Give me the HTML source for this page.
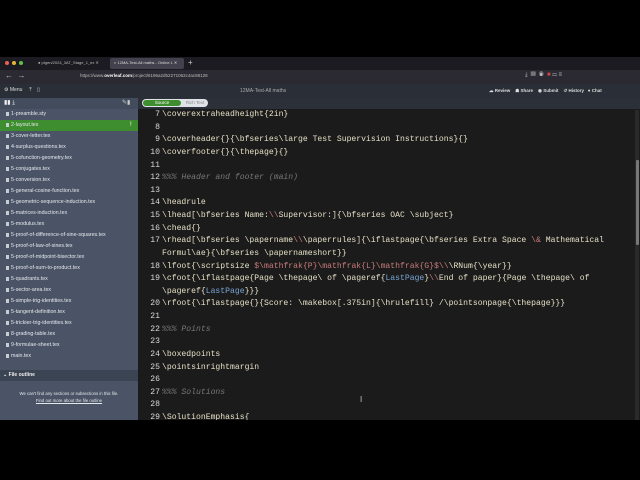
<!DOCTYPE html>
<html><head><meta charset="utf-8"><style>
*{margin:0;padding:0;box-sizing:border-box}
body{width:640px;height:480px;background:#000;overflow:hidden;font-family:"Liberation Sans",sans-serif;position:relative}
.abs{position:absolute}
#tabs{left:0;top:57px;width:640px;height:13px;background:#1c1b22}
#addr{left:0;top:70px;width:640px;height:14px;background:#2b2a33}
#tool{left:0;top:84px;width:640px;height:14px;background:#2a2f37;color:#ddd;font-size:5px}
#side{left:0;top:98px;width:138px;height:322px;background:#4a5466}
#sidehdr{left:0;top:98px;width:138px;height:11px;background:#434c5c}
#ed{left:138px;top:98px;width:502px;height:322px;background:#1b1b1b}
#edhdr{left:138px;top:98px;width:502px;height:11px;background:#2c3139}
.f{position:absolute;left:6px;font-size:5.3px;color:#e6e9ee;height:11px;line-height:11px;white-space:nowrap}
.f:before{content:"";display:inline-block;width:3px;height:4px;background:#c8cdd5;margin-right:2px;vertical-align:-0.5px}
#code{left:140px;top:109px;font-family:"Liberation Mono",monospace;font-size:8.1px;line-height:12.63px;color:#e5e0c6;white-space:pre}
.n{display:inline-block;width:20px;text-align:right;margin-right:2px;color:#d8d8d8}
.c{color:#777;font-style:italic}
.r{color:#c97b7b}
.b{color:#7aa6d6}
</style></head><body>
<div class="abs" id="tabs">
 <div class="abs" style="left:5px;top:4px;width:4px;height:4px;border-radius:50%;background:#ec5f57"></div>
 <div class="abs" style="left:12px;top:4px;width:4px;height:4px;border-radius:50%;background:#e2b43a"></div>
 <div class="abs" style="left:19px;top:4px;width:4px;height:4px;border-radius:50%;background:#5fc04b"></div>
 <div class="abs" style="left:38px;top:3px;font-size:4px;color:#bbb">● ptgen/2024_3AT_Stage_1_ex ✕</div>
 <div class="abs" style="left:110px;top:1px;width:74px;height:11px;background:#42414d;border-radius:2px"></div>
 <div class="abs" style="left:114px;top:3px;font-size:4px;color:#ddd">◐ 12MA-Test-All maths - Online L ✕</div>
 <div class="abs" style="left:188px;top:1px;font-size:8px;color:#ccc">+</div>
</div>
<div class="abs" id="addr">
 <div class="abs" style="left:5px;top:1px;font-size:8px;color:#bbb">←&nbsp; →</div>
 <div class="abs" style="left:80px;top:3px;font-size:4.5px;color:#bbb">https://www.<b style="color:#fff">overleaf.com</b>/project/6196a2d52271062c4ac88128</div>
 <div class="abs" style="left:525px;top:2px;font-size:6px;color:#bbb">⤓ &nbsp;▥ &nbsp;◉ &nbsp;<span style="color:#c44">■</span> ▭ ≡</div>
</div>
<div class="abs" id="tool">
 <div class="abs" style="left:4px;top:3px;font-size:5px">⚙ Menu &nbsp;&nbsp;&nbsp; ⤒ &nbsp;&nbsp; ▯</div>
 <div class="abs" style="left:240px;top:4px;font-size:5px;color:#aaa">12MA-Test-All maths</div>
 <div class="abs" style="left:489px;top:4px;font-size:4.5px;font-weight:bold">☁ Review &nbsp;&nbsp; ☗ Share &nbsp;&nbsp; ◉ Submit &nbsp;&nbsp; ↺ History &nbsp; ● Chat</div>
</div>
<div class="abs" id="side"></div>
<div class="abs" id="sidehdr"><div class="abs" style="left:4px;top:1px;font-size:6px;color:#eee">▮▮ ⤓</div><div class="abs" style="left:122px;top:1px;font-size:6px;color:#ccc">✎▮</div></div>
<div class="abs" style="left:0;top:120px;width:138px;height:11px;background:#3e8e2f"></div>
<div class="abs" style="left:130px;top:120px;font-size:6px;color:#fff;line-height:11px">!</div>
<div class="f" style="top:109px">1-preamble.sty</div>
<div class="f" style="top:120px">2-layout.tex</div>
<div class="f" style="top:131px">3-cover-letter.tex</div>
<div class="f" style="top:142px">4-surplus-questions.tex</div>
<div class="f" style="top:153px">5-cofunction-geometry.tex</div>
<div class="f" style="top:164px">5-conjugates.tex</div>
<div class="f" style="top:175px">5-conversion.tex</div>
<div class="f" style="top:186px">5-general-cosine-function.tex</div>
<div class="f" style="top:197px">5-geometric-sequence-induction.tex</div>
<div class="f" style="top:208px">5-matrices-induction.tex</div>
<div class="f" style="top:219px">5-modulus.tex</div>
<div class="f" style="top:230px">5-proof-of-difference-of-sine-squares.tex</div>
<div class="f" style="top:241px">5-proof-of-law-of-sines.tex</div>
<div class="f" style="top:252px">5-proof-of-midpoint-bisector.tex</div>
<div class="f" style="top:263px">5-proof-of-sum-to-product.tex</div>
<div class="f" style="top:274px">5-quadrants.tex</div>
<div class="f" style="top:285px">5-sector-area.tex</div>
<div class="f" style="top:296px">5-simple-trig-identities.tex</div>
<div class="f" style="top:307px">5-tangent-definition.tex</div>
<div class="f" style="top:318px">5-trickier-trig-identities.tex</div>
<div class="f" style="top:329px">8-grading-table.tex</div>
<div class="f" style="top:340px">9-formulae-sheet.tex</div>
<div class="f" style="top:351px">main.tex</div>
<div class="abs" style="left:0;top:370px;width:138px;height:11px;background:#3b4453"></div>
<div class="abs" style="left:3px;top:372px;font-size:5px;color:#eee;font-weight:bold">⌄ File outline</div>
<div class="abs" style="left:0;top:390px;width:138px;text-align:center;font-size:4.3px;color:#e4e7ec;line-height:7px">We can't find any sections or subsections in this file.<br><u>Find out more about the file outline</u></div>
<div class="abs" id="ed"></div>
<div class="abs" id="edhdr">
 <div class="abs" style="left:4px;top:1px;width:66px;height:8px;border-radius:4px;background:#dfe2e6"></div>
 <div class="abs" style="left:5px;top:2px;width:38px;height:6px;border-radius:3px;background:#3e8e2f;color:#fff;font-size:4.5px;text-align:center;line-height:6px">Source</div>
 <div class="abs" style="left:45px;top:2px;width:24px;font-size:4.5px;color:#888;line-height:6px;text-align:center">Rich Text</div>
</div>
<div class="abs" style="left:635px;top:110px;width:4px;height:310px;background:#2a2a2a"></div>
<div class="abs" style="left:636px;top:160px;width:3px;height:85px;background:#777;border-radius:1px"></div>
<div class="abs" id="code"><span class="n">7</span>\coverextraheadheight{2in}
<span class="n">8</span>
<span class="n">9</span>\coverheader{}{\bfseries\large Test Supervision Instructions}{}
<span class="n">10</span>\coverfooter{}{\thepage}{}
<span class="n">11</span>
<span class="n">12</span><span class="c">%%% Header and footer (main)</span>
<span class="n">13</span>
<span class="n">14</span>\headrule
<span class="n">15</span>\lhead[\bfseries Name:<span class="r">\\</span>Supervisor:]{\bfseries OAC \subject}
<span class="n">16</span>\chead{}
<span class="n">17</span>\rhead[\bfseries \papername<span class="r">\\</span>\paperrules]{\iflastpage{\bfseries Extra Space <span class="r">\&amp;</span> Mathematical
<span class="n"></span>Formul\ae}{\bfseries \papernameshort}}
<span class="n">18</span>\lfoot{\scriptsize <span class="r">$\mathfrak{P}\mathfrak{L}\mathfrak{G}$</span><span class="r">\\</span>\RNum{\year}}
<span class="n">19</span>\cfoot{\iflastpage{Page \thepage\ of \pageref{<span class="b">LastPage</span>}<span class="r">\\</span>End of paper}{Page \thepage\ of
<span class="n"></span>\pageref{<span class="b">LastPage</span>}}}
<span class="n">20</span>\rfoot{\iflastpage{}{Score: \makebox[.375in]{\hrulefill} /\pointsonpage{\thepage}}}
<span class="n">21</span>
<span class="n">22</span><span class="c">%%% Points</span>
<span class="n">23</span>
<span class="n">24</span>\boxedpoints
<span class="n">25</span>\pointsinrightmargin
<span class="n">26</span>
<span class="n">27</span><span class="c">%%% Solutions</span>
<span class="n">28</span>
<span class="n">29</span>\SolutionEmphasis{</div>
<div class="abs" style="left:360px;top:395px;font-size:8px;color:#ccc">I</div>
<div class="abs" style="left:0;top:420px;width:640px;height:60px;background:#000"></div>
</body></html>
